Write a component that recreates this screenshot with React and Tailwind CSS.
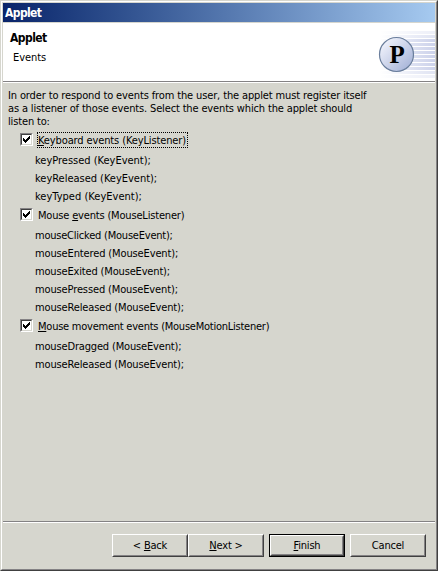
import React from "react";

const groups = [
  {
    label: <><u className="underline-offset-1">K</u>eyboard events (KeyListener)</>,
    focused: true,
    tracking: "tracking-[-0.12px]",
    items: [
      ["keyPressed (KeyEvent);", "tracking-[-0.01px]"],
      ["keyReleased (KeyEvent);", "tracking-[-0.02px]"],
      ["keyTyped (KeyEvent);", "tracking-[0.02px]"],
    ],
  },
  {
    label: <>Mouse <u className="underline-offset-1">e</u>vents (MouseListener)</>,
    tracking: "tracking-[-0.18px]",
    items: [
      ["mouseClicked (MouseEvent);", "tracking-[-0.22px]"],
      ["mouseEntered (MouseEvent);", "tracking-[-0.13px]"],
      ["mouseExited (MouseEvent);", "tracking-[-0.16px]"],
      ["mousePressed (MouseEvent);", "tracking-[-0.13px]"],
      ["mouseReleased (MouseEvent);", "tracking-[-0.14px]"],
    ],
  },
  {
    label: <><u className="underline-offset-1">M</u>ouse movement events (MouseMotionListener)</>,
    tracking: "tracking-[-0.24px]",
    items: [
      ["mouseDragged (MouseEvent);", "tracking-[-0.16px]"],
      ["mouseReleased (MouseEvent);", "tracking-[-0.14px]"],
    ],
  },
];

function Checkbox() {
  return (
    <span className="block size-[13px] shrink-0 border border-t-[#848284] border-l-[#848284] border-r-white border-b-white">
      <span className="block size-[11px] border border-t-[#404040] border-l-[#404040] border-r-[#d6d6ce] border-b-[#d6d6ce] bg-white">
        <svg className="block" width="9" height="9" viewBox="0 0 9 9" shapeRendering="crispEdges">
          <path d="M1 3h1v1h1v1h1v-1h1v-1h1v-1h1v-1h1v3h-1v1h-1v1h-1v1h-1v1h-1v-1h-1v-1h-1z" />
        </svg>
      </span>
    </span>
  );
}

function Group({ label, items, focused, tracking }) {
  return (
    <div>
      <div className="flex h-[17px] items-center pl-[17px]">
        <Checkbox />
        <span
          className={
            "ml-1 flex h-[16px] items-center border border-dotted pt-px " +
            (focused ? "w-[151px] border-black " : "border-transparent ") +
            tracking
          }
        >
          <span>{label}</span>
        </span>
      </div>
      <div className="pt-[3px] pb-px pl-[32px]">
        {items.map(([text, spacing]) => (
          <div key={text} className={"h-[18px] leading-[19px] " + spacing}>{text}</div>
        ))}
      </div>
    </div>
  );
}

function Button({ children, primary }) {
  return (
    <button
      className={"flex h-[23px] w-[76px] " + (primary ? "border border-black" : "")}
    >
      <span className="flex flex-1 self-stretch border border-t-white border-l-white border-r-[#404040] border-b-[#404040]">
        <span className="flex flex-1 items-center justify-center border border-t-transparent border-l-transparent border-r-[#848284] border-b-[#848284]">
          <span>{children}</span>
        </span>
      </span>
    </button>
  );
}

function Logo() {
  const rows = [31, 35, 39, 43, 47, 51, 55, 59, 63, 67, 71, 75];
  return (
    <svg className="block" width="66" height="58" viewBox="369 23 66 58">
      <defs>
        <linearGradient id="fade" gradientUnits="userSpaceOnUse" x1="380" x2="435" y1="0" y2="0">
          <stop offset="0" stopColor="#fff" />
          <stop offset="0.6" stopColor="#dde1f2" />
          <stop offset="1" stopColor="#ccd2ea" />
        </linearGradient>
        <linearGradient id="ball" x1="0" y1="0" x2="1" y2="1">
          <stop offset="0.1" stopColor="#f2f4fc" />
          <stop offset="0.55" stopColor="#c8d0e8" />
          <stop offset="0.95" stopColor="#a2b0d6" />
        </linearGradient>
      </defs>
      {rows.map((y, i) => (
        <rect
          key={y}
          x="380"
          y={y}
          width="55"
          height="3"
          fill="url(#fade)"
          opacity={i === 0 || i === 11 ? 0.35 : i === 1 || i === 10 ? 0.6 : 1}
        />
      ))}
      <circle cx="396.5" cy="54.5" r="17" fill="url(#ball)" stroke="#6a7e9c" strokeWidth="1.2" />
      <text
        x="397"
        y="63"
        textAnchor="middle"
        fontFamily="'Liberation Serif', serif"
        fontWeight="bold"
        fontSize="25"
      >
        P
      </text>
    </svg>
  );
}

export default function App() {
  return (
    <div className="h-[571px] w-[438px] overflow-hidden border border-t-[#d6d6ce] border-l-[#d6d6ce] border-r-[#404040] border-b-[#404040] bg-[#d6d6ce] font-['DejaVu_Sans_Condensed','DejaVu_Sans',sans-serif] text-[11px] leading-[13px] tracking-[-0.2px] text-black [font-stretch:condensed]">
      <div className="flex h-full flex-col border border-t-white border-l-white border-r-[#848284] border-b-[#848284] p-px">
        <div className="flex h-[19px] shrink-0 items-center bg-linear-to-r from-[#0a246a] to-[#a6caf0] pt-px pl-[2px] text-[12px] font-bold tracking-[-0.6px] text-white">
          <span>Applet</span>
        </div>
        <div className="mt-px flex h-[60px] shrink-0 justify-between border-b border-white bg-white">
          <div className="flex flex-1 justify-between border-b border-[#848284]">
            <div className="pt-[9px] pl-[7px]">
              <div className="text-[12px] font-bold tracking-[-0.55px]">Applet</div>
              <div className="mt-[6px] pl-[3px] tracking-[-0.05px]">Events</div>
            </div>
            <Logo />
          </div>
        </div>
        <div className="flex-1 pt-[6px]">
          <div className="pl-[5px] whitespace-nowrap">
            <div className="tracking-[-0.13px]">In order to respond to events from the user, the applet must register itself</div>
            <div className="tracking-[-0.15px]">as a listener of those events. Select the events which the applet should</div>
            <div className="tracking-[-0.15px]">listen to:</div>
          </div>
          <div className="pt-[3px]">
            {groups.map((g, i) => (
              <Group key={i} {...g} />
            ))}
          </div>
        </div>
        <div className="h-[47px] shrink-0 border-t border-[#848284]">
          <div className="flex h-full border-t border-white pt-[11px] pl-[109px]">
            <Button>&lt; <u className="underline-offset-1">B</u>ack</Button>
            <Button><u className="underline-offset-1">N</u>ext &gt;</Button>
            <div className="ml-[5px]">
              <Button primary><u className="underline-offset-1">F</u>inish</Button>
            </div>
            <div className="ml-[5px]">
              <Button>Cancel</Button>
            </div>
          </div>
        </div>
      </div>
    </div>
  );
}
